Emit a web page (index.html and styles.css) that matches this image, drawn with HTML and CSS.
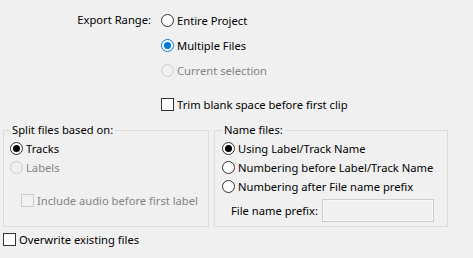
FILE: index.html
```html
<!DOCTYPE html>
<html>
<head>
    <title>Export Multiple</title>
    <link rel="stylesheet" href="styles.css">
</head>
<body>
    <div class="dialog">
        <!-- Export range -->
        <div class="range">
            <div class="range-label">Export Range:</div>
            <div class="range-options">
                <div class="option"><span class="radio"></span>Entire Project</div>
                <div class="option"><span class="radio checked focus"></span>Multiple Files</div>
                <div class="option disabled"><span class="radio"></span>Current selection</div>
            </div>
        </div>
        <div class="option trim"><span class="check"></span>Trim blank space before first clip</div>

        <!-- Groups -->
        <div class="groups">
            <fieldset class="group split">
                <legend>Split files based on:</legend>
                <div class="option"><span class="radio checked"></span>Tracks</div>
                <div class="option disabled"><span class="radio"></span>Labels</div>
                <div class="option disabled include"><span class="check"></span>Include audio before first label</div>
            </fieldset>
            <fieldset class="group names">
                <legend>Name files:</legend>
                <div class="option"><span class="radio checked"></span>Using Label/Track Name</div>
                <div class="option"><span class="radio"></span>Numbering before Label/Track Name</div>
                <div class="option"><span class="radio"></span>Numbering after File name prefix</div>
                <div class="prefix">
                    <label for="prefix">File name prefix:</label>
                    <input type="text" id="prefix" disabled>
                </div>
            </fieldset>
        </div>

        <div class="option overwrite"><span class="check"></span>Overwrite existing files</div>
    </div>
</body>
</html>
```

FILE: styles.css
```css
body {
    margin: 0;
    background-color: #f0f0f0;
    font-family: "Noto Sans", sans-serif;
    font-size: 11.2px;
    color: #000;
}
.dialog {
    width: 473px;
    height: 258px;
    padding-top: 10px;
    box-sizing: border-box;
}
.range {
    display: flex;
}
.range-label {
    width: 151px;
    text-align: right;
    line-height: 20px;
    margin-right: 10px;
}
.range-options {
    display: flex;
    flex-direction: column;
    gap: 5px;
}
.option {
    display: flex;
    align-items: center;
    height: 19px;
    white-space: nowrap;
}
.range-options .option {
    height: 20px;
}
.disabled {
    color: #838383;
}
.radio {
    width: 13px;
    height: 13px;
    box-sizing: border-box;
    border: 1px solid #333;
    border-radius: 50%;
    background-color: #fff;
    margin-right: 3px;
    display: flex;
    align-items: center;
    justify-content: center;
    flex-shrink: 0;
}
.radio.checked::after {
    content: "";
    width: 7px;
    height: 7px;
    border-radius: 50%;
    background-color: #000;
}
.radio.focus {
    border-color: #0078d7;
}
.radio.focus::after {
    background-color: #0078d7;
}
.disabled .radio {
    border-color: #cccccc;
    background-color: #f0f0f0;
}
.check {
    width: 13px;
    height: 13px;
    box-sizing: border-box;
    border: 1px solid #333;
    background-color: #fff;
    margin-right: 3px;
    flex-shrink: 0;
}
.disabled .check {
    border-color: #cccccc;
    background-color: #f0f0f0;
}
.trim {
    height: 20px;
    margin-top: 14px;
    padding-left: 161px;
}
.groups {
    display: flex;
    gap: 5px;
    margin-top: 8px;
    padding-left: 3px;
}
.group {
    margin: 0;
    min-width: 0;
    border: 1px solid #dcdcdc;
    padding: 1px 0 4px 6px;
    box-sizing: border-box;
}
.group legend {
    padding: 0 2px;
    line-height: 16px;
}
.split {
    width: 206px;
}
.names {
    width: 234px;
    padding-left: 7px;
}
.include {
    height: 20px;
    margin-top: 13px;
    padding-left: 11px;
}
.prefix {
    display: flex;
    align-items: center;
    margin-top: 3px;
    padding-left: 9px;
}
.prefix label {
    margin-right: 4px;
}
.prefix input {
    width: 112px;
    height: 23px;
    box-sizing: border-box;
    border: 1px solid #cccccc;
    background-color: #f0f0f0;
    box-shadow: inset 0 0 0 1px #f7f7f7;
    margin: 0;
}
.overwrite {
    height: 20px;
    margin-top: 2px;
    padding-left: 3px;
}
```
